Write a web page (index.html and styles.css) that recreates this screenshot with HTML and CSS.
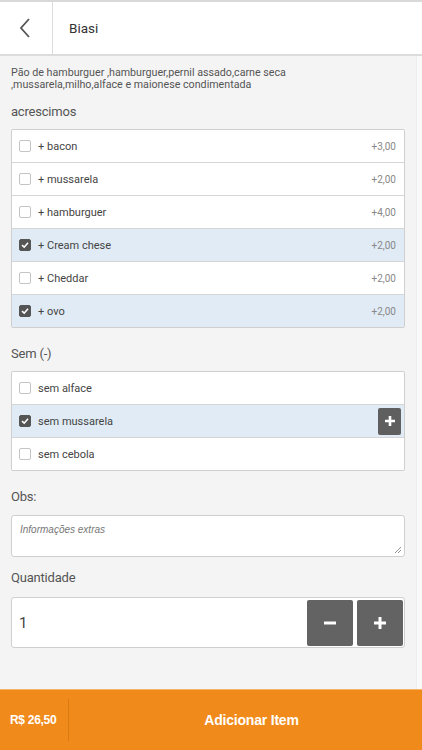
FILE: index.html
```html
<!DOCTYPE html>
<html lang="pt">
<head>
<meta charset="utf-8">
<title>Biasi</title>
<link rel="stylesheet" href="styles.css">
</head>
<body>
<div class="app">
  <header class="topbar">
    <div class="back">
      <svg width="14" height="22" viewBox="0 0 14 22"><polyline points="11,2 3,11 11,20" fill="none" stroke="#555" stroke-width="1.8" stroke-linejoin="miter"/></svg>
    </div>
    <div class="title">Biasi</div>
  </header>
  <div class="scroll">
    <main class="content">
      <p class="desc">Pão de hamburguer ,hamburguer,pernil assado,carne seca<br>,mussarela,milho,alface e maionese condimentada</p>

      <h2 class="label label-first">acrescimos</h2>
      <ul class="list">
        <li class="row"><span class="cb"></span><span class="name">+ bacon</span><span class="price">+3,00</span></li>
        <li class="row"><span class="cb"></span><span class="name">+ mussarela</span><span class="price">+2,00</span></li>
        <li class="row"><span class="cb"></span><span class="name">+ hamburguer</span><span class="price">+4,00</span></li>
        <li class="row checked"><span class="cb"><svg width="8" height="8" viewBox="0 0 8 8"><polyline points="1,4.2 3.2,6.2 7,1.8" fill="none" stroke="#fff" stroke-width="1.6"/></svg></span><span class="name">+ Cream chese</span><span class="price">+2,00</span></li>
        <li class="row"><span class="cb"></span><span class="name">+ Cheddar</span><span class="price">+2,00</span></li>
        <li class="row checked"><span class="cb"><svg width="8" height="8" viewBox="0 0 8 8"><polyline points="1,4.2 3.2,6.2 7,1.8" fill="none" stroke="#fff" stroke-width="1.6"/></svg></span><span class="name">+ ovo</span><span class="price">+2,00</span></li>
      </ul>

      <h2 class="label label-sem">Sem (-)</h2>
      <ul class="list">
        <li class="row"><span class="cb"></span><span class="name">sem alface</span></li>
        <li class="row checked"><span class="cb"><svg width="8" height="8" viewBox="0 0 8 8"><polyline points="1,4.2 3.2,6.2 7,1.8" fill="none" stroke="#fff" stroke-width="1.6"/></svg></span><span class="name">sem mussarela</span>
          <span class="mini-btn"><svg width="12" height="12" viewBox="0 0 12 12"><path d="M6 1v10M1 6h10" stroke="#fff" stroke-width="2.6"/></svg></span>
        </li>
        <li class="row"><span class="cb"></span><span class="name">sem cebola</span></li>
      </ul>

      <h2 class="label label-obs">Obs:</h2>
      <div class="textarea">
        <span class="placeholder">Informações extras</span>
        <svg class="grip" width="8" height="8" viewBox="0 0 8 8"><path d="M7 1L1 7M7 4L4 7" stroke="#888" stroke-width="0.9"/></svg>
      </div>

      <h2 class="label label-qty">Quantidade</h2>
      <div class="qty">
        <span class="qty-val">1</span>
        <span class="qbtn"><svg width="14" height="14" viewBox="0 0 14 14"><path d="M1 7h12" stroke="#fff" stroke-width="3"/></svg></span>
        <span class="qbtn"><svg width="14" height="14" viewBox="0 0 14 14"><path d="M7 1v12M1 7h12" stroke="#fff" stroke-width="3"/></svg></span>
      </div>
    </main>
    <div class="track"></div>
  </div>
  <footer class="footer">
    <div class="total">R$ 26,50</div>
    <div class="add">Adicionar Item</div>
  </footer>
</div>
</body>
</html>
```

FILE: styles.css
```css
* { box-sizing: border-box; }
html, body { margin: 0; padding: 0; }
body {
  font-family: Roboto, "Liberation Sans", Arial, sans-serif;
  color: #444;
  background: #f4f4f4;
}
.app {
  width: 422px;
  height: 750px;
  display: flex;
  flex-direction: column;
  overflow: hidden;
}
.topbar {
  height: 56px;
  flex: none;
  display: flex;
  background: #fff;
  border-top: 2px solid #d9d9d9;
  border-bottom: 2px solid #dcdcdc;
}
.back {
  width: 53px;
  border-right: 1px solid #dcdcdc;
  display: flex;
  align-items: center;
  justify-content: center;
  padding-right: 2px;
}
.title {
  display: flex;
  align-items: center;
  padding-left: 16px;
  font-size: 13.5px;
  color: #333;
}
.scroll {
  flex: 1;
  display: flex;
  min-height: 0;
}
.content {
  width: 416px;
  padding: 0 11px;
}
.track {
  flex: 1;
  background: #f9f9f9;
  border-left: 1px solid #eeeeee;
}
.desc {
  margin: 11px 0 0;
  font-size: 10.7px;
  line-height: 12px;
  color: #555;
}
.label {
  margin: 0;
  font-weight: normal;
  font-size: 13px;
  line-height: 16px;
  letter-spacing: -0.2px;
  color: #555;
}
.label-first { margin-top: 13px; margin-bottom: 9px; }
.label-sem { margin-top: 18px; margin-bottom: 9px; }
.label-obs { margin-top: 18px; margin-bottom: 10px; }
.label-qty { margin-top: 13px; margin-bottom: 11px; }
.list {
  list-style: none;
  margin: 0;
  padding: 0;
  background: #fff;
  border: 1px solid #cfcfcf;
  border-radius: 2px;
}
.row {
  height: 33px;
  display: flex;
  align-items: center;
  padding: 0 8px 0 7px;
  border-top: 1px solid #d6d6d6;
  font-size: 11px;
}
.row:first-child { border-top: none; height: 32px; }
.row.checked { background: #e0ebf5; }
.cb {
  width: 12px;
  height: 12px;
  border: 1px solid #c4c4c4;
  border-radius: 2px;
  background: #fff;
  margin-right: 7px;
  display: flex;
  align-items: center;
  justify-content: center;
  flex: none;
}
.checked .cb {
  background: #555;
  border-color: #555;
}
.name { color: #444; flex: 1; }
.price { font-size: 10px; color: #888; }
.mini-btn {
  width: 23px;
  height: 27px;
  background: #5f5f5f;
  border-radius: 2px;
  display: flex;
  align-items: center;
  justify-content: center;
  margin-right: -5px;
}
.textarea {
  height: 42px;
  background: #fff;
  border: 1px solid #cfcfcf;
  border-radius: 3px;
  padding: 8px 8px;
  display: flex;
  justify-content: space-between;
  align-items: flex-start;
}
.placeholder {
  font-style: italic;
  font-size: 10px;
  color: #777;
  font-family: "Liberation Sans", Arial, sans-serif;
}
.grip { align-self: flex-end; margin: 0 -6px -6px 0; }
.qty {
  height: 51px;
  background: #fff;
  border: 1px solid #cfcfcf;
  border-radius: 3px;
  display: flex;
  align-items: center;
  padding: 1px 1px 1px 7px;
  gap: 4px;
}
.qty-val { flex: 1; font-size: 15px; color: #444; }
.qbtn {
  width: 46px;
  height: 46px;
  background: #636363;
  border-radius: 2px;
  display: flex;
  align-items: center;
  justify-content: center;
}
.footer {
  height: 61px;
  flex: none;
  display: flex;
  align-items: center;
  background: #f08a1a;
  border-top: 1px solid #f5b46a;
  color: #fff;
  font-family: "Liberation Sans", Arial, sans-serif;
  font-weight: bold;
}
.total {
  width: 69px;
  height: 42px;
  display: flex;
  align-items: center;
  padding-left: 10px;
  font-size: 12px;
  border-right: 1px solid #d97a12;
  letter-spacing: -0.3px;
}
.add {
  flex: 1;
  text-align: center;
  font-size: 14px;
  padding-left: 12px;
  letter-spacing: -0.2px;
}
```
